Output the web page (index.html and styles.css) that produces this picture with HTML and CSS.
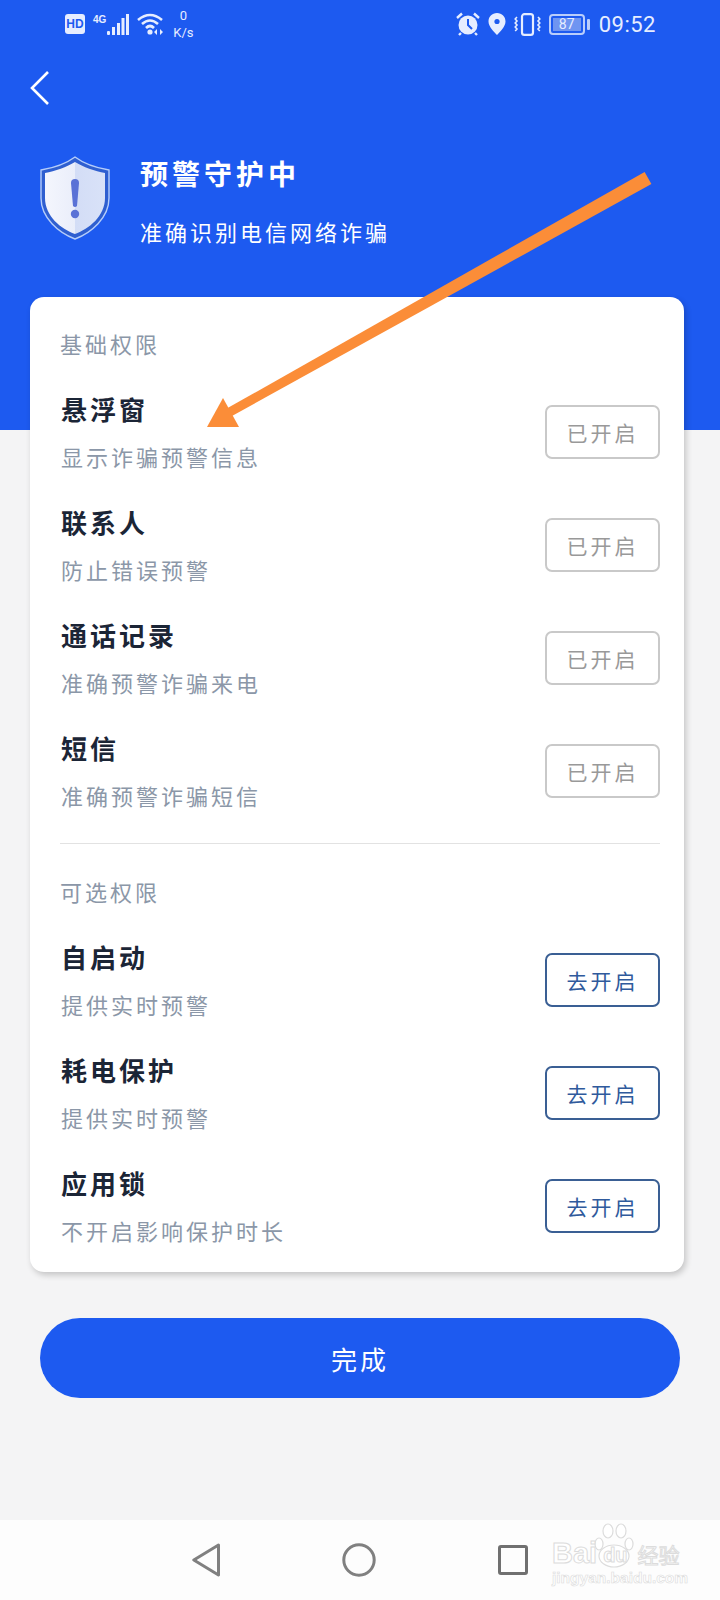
FILE: index.html
```html
<!DOCTYPE html>
<html lang="zh-CN">
<head>
    <meta charset="UTF-8">
    <meta name="viewport" content="width=device-width, initial-scale=1.0">
    <title>预警守护中</title>
    <link rel="stylesheet" href="styles.css">
</head>
<body>
    <div class="page">
        <header class="header">
            <div class="status-bar">
                <div class="status-group">
                    <span class="hd-badge">HD</span>
                    <span class="net-type">4G</span>
                    <svg class="signal" width="24" height="23" viewBox="0 0 24 23">
                        <rect x="1" y="18" width="3" height="4" rx="1"/>
                        <rect x="6" y="14" width="3" height="8"/>
                        <rect x="11" y="10" width="3" height="12"/>
                        <rect x="15.5" y="5" width="3" height="17"/>
                        <rect x="20" y="1" width="3" height="21"/>
                    </svg>
                    <svg class="wifi" width="28" height="23" viewBox="0 0 28 23">
                        <path d="M1 7 Q13 -3 25 7 M5 11 Q13 4 21 11 M9 15 Q13 11 17 15" fill="none" stroke="#e6edff" stroke-width="2.6"/>
                        <circle cx="13" cy="19" r="2.6" fill="#e6edff"/>
                        <path d="M20 16 l-3 3 l3 3 z M23 16 l3 3 l-3 3 z" fill="#e6edff"/>
                    </svg>
                    <div class="speed"><span>0</span><span>K/s</span></div>
                </div>
                <div class="status-group status-right">
                    <svg width="24" height="24" viewBox="0 0 24 24">
                        <circle cx="12" cy="13" r="9.5" fill="#e6edff"/>
                        <path d="M12 7 V13 L16 17" fill="none" stroke="#1d5af0" stroke-width="2"/>
                        <path d="M1 6 L6 1.5 M23 6 L18 1.5 M5 21 L3 23 M19 21 L21 23" stroke="#e6edff" stroke-width="2.4" fill="none"/>
                    </svg>
                    <svg width="18" height="22" viewBox="0 0 18 22">
                        <path d="M9 0 C4 0 0.5 3.6 0.5 8.4 C0.5 13.5 6 18.6 9 22 C12 18.6 17.5 13.5 17.5 8.4 C17.5 3.6 14 0 9 0 Z" fill="#e6edff"/>
                        <circle cx="9" cy="8.5" r="2.6" fill="#1d5af0"/>
                    </svg>
                    <svg width="27" height="23" viewBox="0 0 27 23">
                        <rect x="8" y="1.2" width="11" height="20.6" rx="2.4" fill="none" stroke="#e6edff" stroke-width="2.2"/>
                        <path d="M3 4 L1.2 6 L3 8 L1.2 10 L3 12 L1.2 14 L3 16 L1.2 18 M24 4 L25.8 6 L24 8 L25.8 10 L24 12 L25.8 14 L24 16 L25.8 18" fill="none" stroke="#e6edff" stroke-width="1.6"/>
                    </svg>
                    <div class="battery">
                        <div class="battery-body">
                            <div class="battery-fill"></div>
                            <span class="battery-num">87</span>
                        </div>
                        <div class="battery-tip"></div>
                    </div>
                    <span class="clock">09:52</span>
                </div>
            </div>
            <svg class="back-icon" width="20" height="36" viewBox="0 0 20 36">
                <path d="M18 2 L2 18 L18 34" fill="none" stroke="#fff" stroke-width="2.6"/>
            </svg>
            <div class="guard">
                <svg class="shield" width="72" height="84" viewBox="0 0 72 84">
                    <defs>
                        <linearGradient id="shieldFill" x1="0" y1="0" x2="1" y2="0">
                            <stop offset="0" stop-color="#f4f6fd"/>
                            <stop offset="0.5" stop-color="#eaeefa"/>
                            <stop offset="0.5" stop-color="#d3ddf6"/>
                            <stop offset="1" stop-color="#d9e2f8"/>
                        </linearGradient>
                    </defs>
                    <path d="M36 1 C28 7 14 12 2 14 V42 C2 62 20 77 36 83 C52 77 70 62 70 42 V14 C58 12 44 7 36 1 Z" fill="#2f5fd0" stroke="#b5cdfa" stroke-width="1.4"/>
                    <path d="M36 6 C28 11 16 15 6 17 V42 C6 60 22 73 36 78 C50 73 66 60 66 42 V17 C56 15 44 11 36 6 Z" fill="url(#shieldFill)"/>
                    <path d="M32 27 Q32 23 36 23 Q40 23 40 27 L38 50 Q36 52 34 50 Z" fill="#5a72d6"/>
                    <circle cx="36" cy="58" r="4.2" fill="#5a72d6"/>
                </svg>
                <div class="guard-text">
                    <h1>预警守护中</h1>
                    <p>准确识别电信网络诈骗</p>
                </div>
            </div>
        </header>

        <main class="content">
            <section class="card">
                <div class="section-label">基础权限</div>
                <div class="perm-row">
                    <div>
                        <div class="perm-name">悬浮窗</div>
                        <div class="perm-desc">显示诈骗预警信息</div>
                    </div>
                    <button class="perm-btn">已开启</button>
                </div>
                <div class="perm-row">
                    <div>
                        <div class="perm-name">联系人</div>
                        <div class="perm-desc">防止错误预警</div>
                    </div>
                    <button class="perm-btn">已开启</button>
                </div>
                <div class="perm-row">
                    <div>
                        <div class="perm-name">通话记录</div>
                        <div class="perm-desc">准确预警诈骗来电</div>
                    </div>
                    <button class="perm-btn">已开启</button>
                </div>
                <div class="perm-row">
                    <div>
                        <div class="perm-name">短信</div>
                        <div class="perm-desc">准确预警诈骗短信</div>
                    </div>
                    <button class="perm-btn">已开启</button>
                </div>
                <div class="divider"></div>
                <div class="section-label">可选权限</div>
                <div class="perm-row">
                    <div>
                        <div class="perm-name">自启动</div>
                        <div class="perm-desc">提供实时预警</div>
                    </div>
                    <button class="perm-btn perm-btn-on">去开启</button>
                </div>
                <div class="perm-row">
                    <div>
                        <div class="perm-name">耗电保护</div>
                        <div class="perm-desc">提供实时预警</div>
                    </div>
                    <button class="perm-btn perm-btn-on">去开启</button>
                </div>
                <div class="perm-row">
                    <div>
                        <div class="perm-name">应用锁</div>
                        <div class="perm-desc">不开启影响保护时长</div>
                    </div>
                    <button class="perm-btn perm-btn-on">去开启</button>
                </div>
            </section>
            <button class="done-btn">完成</button>
        </main>

        <nav class="nav-bar">
            <svg width="28" height="34" viewBox="0 0 28 34">
                <path d="M26.5 2 L1.8 17 L26.5 32 Z" fill="none" stroke="#808080" stroke-width="3" stroke-linejoin="round"/>
            </svg>
            <svg width="34" height="34" viewBox="0 0 34 34">
                <circle cx="17" cy="17" r="15.2" fill="none" stroke="#808080" stroke-width="3"/>
            </svg>
            <svg width="30" height="30" viewBox="0 0 30 30">
                <rect x="1.5" y="1.5" width="27" height="27" rx="1.5" fill="none" stroke="#707070" stroke-width="3"/>
            </svg>
        </nav>

        <!-- arrow drawn over the screenshot -->
        <svg class="annotation" width="720" height="1600" viewBox="0 0 720 1600">
            <path d="M651.4 184.1 L644.6 171.9 L225.8 409.1 L230.2 416.9 Z" fill="#fb8d38"/>
            <path d="M207 427 L223 398 L239 427 Z" fill="#fb8d38"/>
        </svg>

        <div class="watermark">
            <svg class="paw" width="40" height="48" viewBox="0 0 40 48">
                <g fill="#fff" stroke="#dcdcdc" stroke-width="1.2">
                    <ellipse cx="5" cy="22" rx="4" ry="6"/>
                    <ellipse cx="14" cy="9" rx="5" ry="7"/>
                    <ellipse cx="27" cy="9" rx="5" ry="7"/>
                    <ellipse cx="35" cy="22" rx="4" ry="6"/>
                    <ellipse cx="20" cy="34" rx="15" ry="11"/>
                </g>
            </svg>
            <div class="wm-top"><span>Bai</span><span class="wm-du">du</span><span class="wm-cn">经验</span></div>
            <div class="wm-url">jingyan.baidu.com</div>
        </div>
    </div>
</body>
</html>
```

FILE: styles.css
```css
* {
    box-sizing: border-box;
}
body {
    margin: 0;
    font-family: "Noto Sans CJK SC", "Noto Sans", sans-serif;
    background-color: #f4f4f5;
}
.page {
    position: relative;
    width: 720px;
    height: 1600px;
    display: flex;
    flex-direction: column;
    overflow: hidden;
}

/* header */
.header {
    height: 430px;
    padding-top: 8px;
    background-color: #1d5af0;
    color: #fff;
}
.status-bar {
    display: flex;
    justify-content: space-between;
    align-items: center;
    height: 32px;
    padding: 0 64px;
    color: #e6edff;
}
.status-group {
    display: flex;
    align-items: center;
}
.status-right {
    gap: 8px;
}
.hd-badge {
    width: 20px;
    height: 20px;
    margin-left: 1px;
    border-radius: 3px;
    background-color: #e6edff;
    color: #1d5af0;
    font-family: "Liberation Sans", sans-serif;
    font-size: 12px;
    font-weight: 700;
    line-height: 20px;
    text-align: center;
}
.net-type {
    margin: -10px 0 0 8px;
    font-family: "Liberation Sans", sans-serif;
    font-size: 10px;
    font-weight: 700;
}
.signal {
    margin-left: 0;
    fill: #e6edff;
}
.wifi {
    margin-left: 7px;
}
.speed {
    display: flex;
    flex-direction: column;
    align-items: center;
    margin-left: 8px;
    font-family: Roboto, sans-serif;
    font-size: 13px;
    line-height: 17px;
}
.battery {
    display: flex;
    align-items: center;
    gap: 2px;
}
.battery-body {
    position: relative;
    width: 36px;
    height: 21px;
    padding: 2px;
    border: 2px solid #b9cdfb;
    border-radius: 4px;
}
.battery-fill {
    width: 28px;
    height: 100%;
    background-color: #6f95f1;
}
.battery-num {
    position: absolute;
    inset: 0;
    color: #e6edff;
    font-family: Roboto, sans-serif;
    font-size: 14px;
    line-height: 17px;
    text-align: center;
}
.battery-tip {
    width: 3px;
    height: 11px;
    border-radius: 1px;
    background-color: #b9cdfb;
}
.clock {
    margin-left: 1px;
    font-family: Roboto, sans-serif;
    font-size: 22px;
    letter-spacing: 0.5px;
}
.back-icon {
    display: block;
    margin: 30px 0 0 30px;
}
.guard {
    display: flex;
    align-items: flex-start;
    margin: 50px 0 0 39px;
}
.shield {
    flex: none;
}
.guard-text {
    margin-top: 2px;
    margin-left: 29px;
}
.guard-text h1 {
    margin: 0;
    font-size: 28px;
    font-weight: 700;
    letter-spacing: 4px;
    line-height: 30px;
}
.guard-text p {
    margin: 28px 0 0;
    font-size: 22px;
    letter-spacing: 3px;
    line-height: 30px;
}

/* card */
.content {
    flex: 1;
    margin-top: -133px;
    padding: 0 36px 0 30px;
}
.card {
    padding: 32px 24px 10px 30px;
    height: 975px;
    border-radius: 14px;
    background-color: #fff;
    box-shadow: 2px 3px 6px rgba(0, 0, 0, 0.2);
}
.section-label {
    height: 28px;
    margin-bottom: 18px;
    color: #8b97a8;
    font-size: 22px;
    letter-spacing: 3px;
    line-height: 28px;
}
.perm-row {
    display: flex;
    justify-content: space-between;
    align-items: center;
    height: 113px;
}
.perm-name {
    padding-left: 1px;
    color: #1b2536;
    font-size: 26px;
    font-weight: 700;
    letter-spacing: 3px;
    line-height: 34px;
}
.perm-desc {
    margin-top: 15px;
    padding-left: 1px;
    color: #8b97a8;
    font-size: 22px;
    letter-spacing: 3px;
    line-height: 30px;
}
.perm-btn {
    width: 115px;
    height: 54px;
    padding: 0;
    border: 2px solid #c9c9c9;
    border-radius: 7px;
    background-color: #fff;
    color: #999;
    font-family: inherit;
    font-size: 21px;
    letter-spacing: 3px;
}
.perm-btn-on {
    border-color: #3a5f94;
    color: #2f5a9c;
}
.divider {
    height: 1px;
    margin-top: 16px;
    margin-bottom: 33px;
    background-color: #e2e2e2;
}
.done-btn {
    display: block;
    width: 640px;
    height: 80px;
    margin: 46px 0 0 10px;
    border: none;
    border-radius: 40px;
    background-color: #1d5af0;
    color: #fff;
    font-family: inherit;
    font-size: 26px;
    letter-spacing: 3px;
}

/* bottom bar */
.nav-bar {
    display: flex;
    align-items: center;
    gap: 122px;
    height: 80px;
    padding-left: 192px;
    background-color: #fdfdfd;
}

/* overlays */
.annotation {
    position: absolute;
    top: 0;
    left: 0;
    pointer-events: none;
}
.watermark {
    position: absolute;
    left: 552px;
    top: 1522px;
    width: 130px;
    height: 66px;
    font-family: "Liberation Sans", sans-serif;
    color: #fff;
}
.paw {
    position: absolute;
    left: 42px;
    top: 0;
}
.wm-top {
    position: absolute;
    top: 16px;
    left: 0;
    display: flex;
    font-size: 29px;
    font-weight: 700;
    line-height: 30px;
    -webkit-text-stroke: 1px #dcdcdc;
}
.wm-du {
    position: relative;
    margin-left: 6px;
    font-size: 20px;
    line-height: 34px;
}
.wm-cn {
    margin-left: 10px;
    font-family: "Noto Sans CJK SC", sans-serif;
    font-size: 21px;
    font-weight: 400;
    line-height: 32px;
}
.wm-url {
    position: absolute;
    top: 47px;
    left: 0;
    font-size: 15.5px;
    font-weight: 700;
    line-height: 18px;
    white-space: nowrap;
    -webkit-text-stroke: 0.6px #dcdcdc;
}
```
